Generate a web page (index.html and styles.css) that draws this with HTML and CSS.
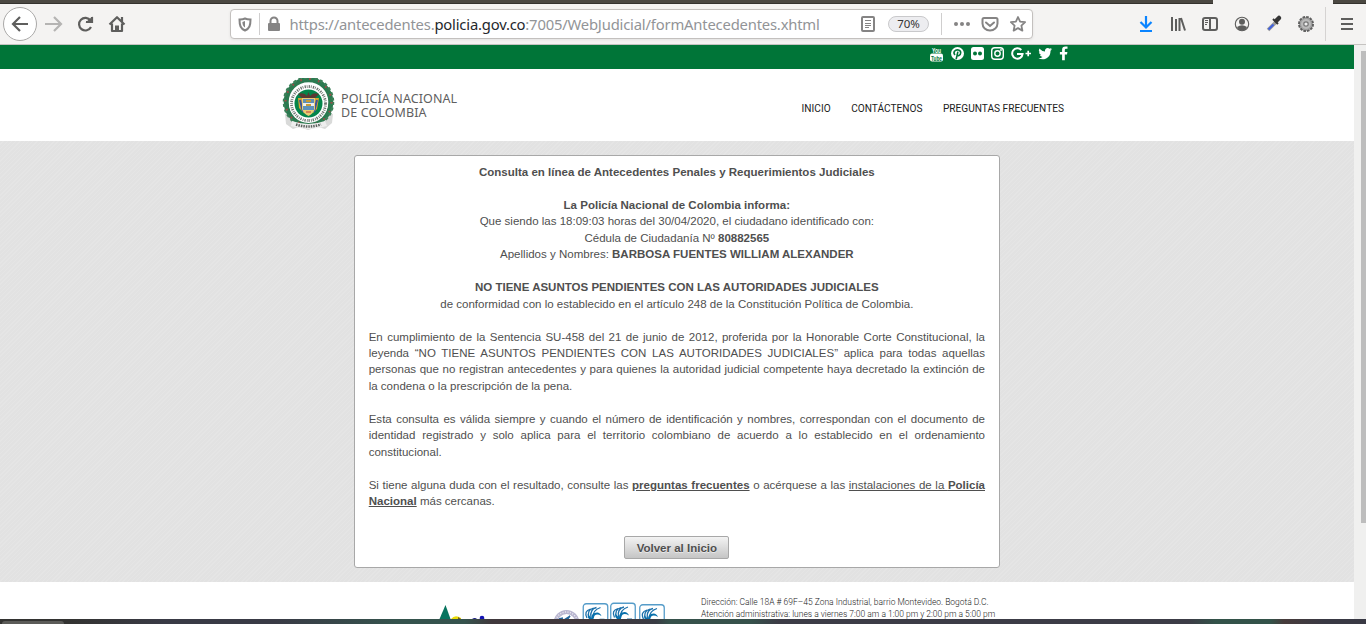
FILE: index.html
```html
<!DOCTYPE html>
<html lang="es">
<head>
<meta charset="utf-8">
<title>Policía Nacional de Colombia</title>
<link rel="stylesheet" href="styles.css">
</head>
<body>
<div class="topbar"><i></i></div>
<div class="toolbar">
  <svg class="nav-icons" width="140" height="40" viewBox="0 4 140 40" fill="none" stroke="#5e5e5d" stroke-width="2.2">
    <circle cx="20" cy="24" r="16.5" fill="#fff" stroke="#aaa9a8" stroke-width="1"/>
    <path d="M28 24H13M20 17l-7 7 7 7"/>
    <path stroke="#b5b4b3" d="M45 24h15M54 17l7 7-7 7"/>
    <path d="M90.5 20.5A6.3 6.3 0 1 0 91 27"/><path d="M92.5 16.5v6h-7z" fill="#5e5e5d" stroke="none"/><path d="M92 17v5h-6"/>
    <path d="M109.5 24.5l7.5-7.3 7.5 7.3M112 23.500v7.500h10v-7.500M122 17v5" stroke-linejoin="round"/><path d="M117 31v-5.500" stroke-width="4"/>
  </svg>
  <div class="urlbar">
    <svg width="58" height="28" viewBox="231 10 58 28" fill="none" stroke="#858484" stroke-width="2">
      <path d="M240 19.500q3 0 5-1 2 1 5.500 1c0 6-1 9-5.500 11-4.500-2-5.500-5-5.500-11z"/><path d="M245 21v6.500c-2-1-2.600-3-2.600-5.500z" fill="#858484" stroke="none"/>
      <path d="M259.500 13v22" stroke="#cfcece" stroke-width="1"/>
      <path d="M270.500 24v-3a3.500 3.500 0 0 1 7 0v3"/><rect x="268" y="23" width="12" height="8" rx="1" fill="#858484" stroke="none"/>
    </svg>
    <span class="url">https://antecedentes.<b>policia.gov.co</b>:7005/WebJudicial/formAntecedentes.xhtml</span>
    <svg class="reader" width="16" height="18" viewBox="860 15 16 18" fill="none" stroke="#858484" stroke-width="2"><rect x="862" y="17" width="12" height="14" rx="1"/><path d="M865 20.500h6M865 23.500h6M865 25.500h6M865 27.500h4" stroke-width="1"/></svg>
    <span class="zoom">70%</span>
    <svg width="92" height="28" viewBox="940 10 92 28" fill="none" stroke="#858484" stroke-width="2">
      <path d="M941.500 13v22" stroke="#cfcece" stroke-width="1"/><g fill="#858484" stroke="none"><circle cx="956" cy="24" r="2"/><circle cx="962" cy="24" r="2"/><circle cx="968" cy="24" r="2"/></g>
      <path d="M984 18h12q1.500 0 1.500 1.500v4a7.500 7 0 0 1-15 0v-4Q982.500 18 984 18zM986 22.500l4 3.500 4-3.500" stroke-linecap="round"/>
      <path stroke-width="1.800" stroke-linejoin="round" d="M1018 17l2.100 4.600 5 .6-3.700 3.400 1 5-4.400-2.500-4.400 2.500 1-5-3.700-3.400 5-.6z"/>
    </svg>
  </div>
  <svg class="tools" width="232" height="40" viewBox="1134 4 232 40" fill="none" stroke="#5e5e5d" stroke-width="2">
    <path stroke="#0a84ff" stroke-width="2.200" d="M1146 16v11M1140.500 22l5.500 5.500 5.500-5.500M1140 31h12"/>
    <path d="M1172 17v14M1176 19v12M1179.500 18v13M1181 18l4 12.500"/>
    <rect x="1203" y="18" width="14" height="12" rx="2"/><path d="M1210 18v12"/><path stroke-width="1" d="M1205 20.500h3M1205 22.500h3M1205 24.500h2"/>
    <circle cx="1242" cy="24" r="6.700" stroke-width="1.100"/><circle cx="1242" cy="21.800" r="3" fill="#5e5e5d" stroke="none"/><path fill="#5e5e5d" stroke="none" d="M1237 27q5-3.500 10 0-1.500 3.500-5 3.500t-5-3.500z"/>
    <path stroke="#9b9b9b" stroke-width="3.500" d="M1268 30l8-8"/><path stroke="#4162df" stroke-width="2" d="M1268.500 29.500l5-5"/><path stroke="#353535" stroke-width="4.500" stroke-linecap="round" d="M1276.500 20.500l2.500-2.500"/><path stroke="#353535" d="M1273 19l5 5"/>
    <circle cx="1306" cy="24" r="7" fill="#a9a9a9" stroke="#5f5f5f" stroke-width="2" stroke-dasharray="2.600 1.060"/><circle cx="1306" cy="24" r="5.500" fill="#bababa" stroke="#999" stroke-width="1"/><circle cx="1306" cy="24" r="2.200" fill="#eee" stroke="#777" stroke-width="1.200"/>
    <path stroke="#d5d3d2" stroke-width="1" d="M1325.500 7v34"/>
    <path d="M1341 19h12M1341 24h12M1341 29h12"/>
  </svg>
</div>
<div class="viewport">
  <div class="page">
    <div class="green"><svg width="144" height="18" viewBox="928 45 144 18" fill="none" stroke="#fff" stroke-width="2">
      <text x="932" y="53" class="yt" textLength="9" lengthAdjust="spacingAndGlyphs">You</text>
      <rect x="930" y="53.500" width="13" height="8" rx="2" fill="#fff" stroke="none"/><text x="931" y="60.500" class="yt tube" textLength="11" lengthAdjust="spacingAndGlyphs">Tube</text>
      <circle cx="957.500" cy="53.500" r="6.500" fill="#fff" stroke="none"/><path stroke="#007538" stroke-width="1.600" d="M955 55q-1.800-2-.5-3.800c2-2.500 6.300-1.200 6.200 1.500-.1 3-3.200 3.700-3.900 1.800M957.900 51.600l-1.700 7.500"/>
      <rect x="971" y="47" width="13" height="13" rx="2.500" fill="#fff" stroke="none"/><g fill="#007538" stroke="none"><circle cx="975" cy="53.500" r="2"/><circle cx="980" cy="53.500" r="2"/></g>
      <rect x="991.700" y="47.700" width="11.600" height="11.600" rx="3" stroke-width="1.400"/><circle cx="997.500" cy="53.500" r="2.700" stroke-width="1.400"/><circle cx="1001" cy="50" r=".9" fill="#fff" stroke="none"/>
      <path d="M1021.300 50a5.200 5.200 0 1 0 1.300 3.900H1017"/><path d="M1025.500 53.500h5.500M1028.200 50.800v5.500" stroke-width="1.700"/>
      <path fill="#fff" stroke="none" d="M1052 49.200q-.6.900-1.500 1.500c.1 5.500-3.700 8.600-7.800 8.600q-2.500 0-4.200-1.200 2.300.1 4-1.200-2-.1-2.600-1.900h1.200q-2.100-.8-2.200-2.900l1.200.3q-2-1.600-.8-3.800 2.300 2.700 5.700 2.900c-.5-3.500 3-4.500 4.700-2.700l1.800-.7q-.3 1-1.200 1.500z"/>
      <path stroke="none" fill="#fff" d="M1067.500 46.500v2.300h-1.500q-1.200 0-1.200 1.200v2h2.600l-.4 2.500h-2.200v5.800h-2.700v-5.800h-2.200v-2.500h2.200v-2.200q0-3.300 3.300-3.300z"/>
    </svg></div>
    <header>
      <svg width="54" height="52" viewBox="0 0 54 52">
        <path d="M3 36l1 10 7 5 6-2 9 3 10-3 7 2 7-6 1-9-10-2H13z" fill="#d9dad9"/>
        <circle cx="26.500" cy="24" r="22.300" fill="none" stroke="#2b7a50" stroke-width="5"/>
        <circle cx="26.500" cy="24" r="24.500" fill="none" stroke="#3c8059" stroke-width="2.500" stroke-dasharray="3 2.500"/>
        <circle cx="26.500" cy="24" r="23" fill="none" stroke="#a14b47" stroke-width="2" stroke-dasharray="1.600 7.430"/>
        <circle cx="26.500" cy="25.500" r="19.500" fill="#fff"/><circle cx="26.500" cy="25.500" r="17" fill="none" stroke="#6d746f" stroke-width="2.800" stroke-dasharray="1.300 .9 .8 1.200"/>
        <circle cx="26.500" cy="25.500" r="14" fill="#04854a"/>
        <path d="M16 16q6-2 9 2l1.500-4 1.500 4q3-4 9-2l-5 5H21z" fill="#5c3932"/><path d="M16 20h6v15l-5-5zM31 20h6l-2 11-4 4z" fill="#d5a233"/><path d="M18 22l3 12M35 22l-3 12" stroke="#3d5399" stroke-width="2"/>
        <path d="M20 20h13v11q-2 5-6.500 7-5-2-6.500-7z" fill="#e7cc74"/><path d="M21 21h11v4H21z" fill="#5e8fb5"/><path d="M21 25h11v3H21z" fill="#eee"/><path d="M21 28h11v4H21z" fill="#5d92bc"/><path d="M24 22h5v2h-5zM24 26h5v2h-5z" fill="#c59b35"/><path d="M24 34h5" stroke="#be4136"/>
        <path d="M10 43q16 6 33 0l2 5q-18 6-36 0z" fill="#eee"/><path d="M14 46.500q12 4 25 0" stroke="#5d625e" stroke-width="2.500" stroke-dasharray="1.500 1" fill="none"/>
      </svg>
      <div class="brand">POLICÍA NACIONAL<br>DE COLOMBIA</div>
      <nav><a>INICIO</a><a>CONTÁCTENOS</a><a>PREGUNTAS FRECUENTES</a></nav>
    </header>
    <main>
      <section class="card">
        <div class="center">
          <b>Consulta en línea de Antecedentes Penales y Requerimientos Judiciales</b><br><br>
          <b>La Policía Nacional de Colombia informa:</b><br>
          Que siendo las 18:09:03 horas del 30/04/2020, el ciudadano identificado con:<br>
          Cédula de Ciudadanía Nº <b>80882565</b><br>
          Apellidos y Nombres: <b>BARBOSA FUENTES WILLIAM ALEXANDER</b><br><br>
          <b>NO TIENE ASUNTOS PENDIENTES CON LAS AUTORIDADES JUDICIALES</b><br>
          de conformidad con lo establecido en el artículo 248 de la Constitución Política de Colombia.
        </div>
        <p>En cumplimiento de la Sentencia SU-458 del 21 de junio de 2012, proferida por la Honorable Corte Constitucional, la leyenda “NO TIENE ASUNTOS PENDIENTES CON LAS AUTORIDADES JUDICIALES” aplica para todas aquellas personas que no registran antecedentes y para quienes la autoridad judicial competente haya decretado la extinción de la condena o la prescripción de la pena.</p>
        <p>Esta consulta es válida siempre y cuando el número de identificación y nombres, correspondan con el documento de identidad registrado y solo aplica para el territorio colombiano de acuerdo a lo establecido en el ordenamiento constitucional.</p>
        <p>Si tiene alguna duda con el resultado, consulte las <u><b>preguntas frecuentes</b></u> o acérquese a las <u>instalaciones de la <b>Policía Nacional</b></u> más cercanas.</p>
        <button>Volver al Inicio</button>
      </section>
    </main>
    <footer>
      <svg width="236" height="37" viewBox="436 582 236 37">
        <path d="M445.500 605l-6 14h11z" fill="#08745f"/><path d="M451 619q4-5 10-1v1z" fill="#eadc05"/><path d="M458 617l3 2h-3z" fill="#765b22"/><path d="M472 619q3-2 5 0z" fill="#191a80"/><circle cx="482" cy="618" r="2.300" fill="#1414b4"/>
        <circle cx="566.500" cy="623" r="11" fill="#fff" stroke="#b9b6d0" stroke-width="4"/><circle cx="566.500" cy="623" r="11" fill="none" stroke="#e9e8ef" stroke-width="1.500" stroke-dasharray="1 1.500"/><path d="M559 619l4-1M564 620l6-4-3 4" stroke="#23669c" stroke-width="1.500" fill="none"/>
        <defs><g id="swirl"><rect x=".75" y=".75" width="24.500" height="26" rx="3" fill="#fff" stroke="#559cc9" stroke-width="1.300"/><path d="M4.500 15Q1 8 8 6M6.500 15Q4 7 11 5M8.500 15Q7 6 14 4.500M10.500 15Q10 7 18 4.500" stroke="#1b70ab" stroke-width="1.300" fill="none"/><path d="M5 11q0 6 6 8V16q1-7 8-3-2-5-7-3-3 1-3 5z" fill="#0870ac"/><path d="M17 16h5" stroke="#91b9d1"/></g></defs>
        <use href="#swirl" x="582.500" y="603"/><use href="#swirl" x="610" y="602.500"/><use href="#swirl" x="639" y="604"/>
      </svg>
      <div class="address"><span>Dirección: Calle 18A # 69F–45 Zona Industrial, barrio Montevideo. Bogotá D.C.</span><br><span>Atención administrativa: lunes a viernes 7:00 am a 1:00 pm y 2:00 pm a 5:00 pm</span></div>
    </footer>
  </div>
  <div class="scroll"><i></i></div>
</div>
<div class="desktop"><i></i></div>
</body>
</html>
```
FILE: styles.css
```css
* { box-sizing: border-box; }
body { margin: 0; width: 1366px; height: 624px; overflow: hidden; background: #fff; font-family: "Liberation Sans", Arial, sans-serif; }
svg { display: block; flex: none; }
.topbar { height: 4px; background: #4b4842; border-bottom: 1px solid #34322e; }
.topbar i { display: block; margin-left: 1213px; width: 120px; height: 4px; background: #f4f3f2; }
.toolbar { height: 41px; display: flex; background: #f4f3f2; border-bottom: 1px solid #c5c3c1; }
.urlbar { margin: 5px 0 0 90px; width: 803px; height: 30px; border: 1px solid #c3c0be; border-radius: 4px; background: #fff; display: flex; align-items: center; box-shadow: 0 1px 3px #0001; }
.url { width: 571px; font: 14.8px/28px "Noto Sans", sans-serif; color: #929497; white-space: nowrap; letter-spacing: -.19px; padding-left: .5px; }
.url b { color: #25282c; font-weight: 400; }
.zoom { margin: 0 11px 0 12px; width: 41px; height: 16px; border: 1px solid #c9c9cb; border-radius: 8px; background: #ededf0; font: 11.5px/14px "Noto Sans", sans-serif; color: #333; text-align: center; }
.tools { margin-left: 101px; }
.viewport { display: flex; height: 574px; }
.page { width: 1354px; }
.green { height: 24px; background: #007538; padding-left: 928px; }
.yt { font: bold 8px "Liberation Sans", sans-serif; fill: #fff; stroke: none; }
.tube { fill: #007538; font-size: 7px; }
header { height: 72px; background: #fff; display: flex; padding: 9px 290px 0 282px; }
.brand { margin: 14px 0 0 5px; font: 12.5px/14px "Noto Sans", sans-serif; color: #606060; white-space: nowrap; letter-spacing: .1px; }
nav { display: flex; gap: 20.5px; margin: 23px 0 0 auto; font: 10.15px/16px Roboto, sans-serif; color: #222; white-space: nowrap; }
main { height: 441px; padding-top: 14px; background: repeating-linear-gradient(135deg, #e2e2e2 0 2px, #e5e5e5 2px 3px); }
.card { margin: 0 auto; width: 646px; height: 413px; background: #fff; border: 1px solid #a8a8a8; border-radius: 3px; padding: 8px 14px 0 13.7px; font-size: 11.52px; line-height: 16.46px; color: #4f4f4f; }
.center { text-align: center; }
p { margin: 16.46px 0 0; text-align: justify; }
button { display: block; margin: 26px auto 0; width: 105px; height: 23px; border: 1px solid #a8a8a8; border-radius: 2px; background: linear-gradient(#f3f3f3, #c5c5c5); color: #4f4f4f; font: bold 11.52px "Liberation Sans", sans-serif; padding: 1px 0 0; text-shadow: 0 1px 0 #fff8; }
footer { height: 37px; display: flex; padding-left: 436px; background: #fff; overflow: hidden; }
.address { margin: 14px 0 0 29px; font: 300 8.47px/12px Roboto, sans-serif; color: #222; white-space: nowrap; }
.scroll { width: 12px; background: #f0f0ef; padding: 6px 0 0 7px; }
.scroll i { display: block; width: 5px; height: 472px; background: #bdbdbd; }
.desktop { height: 5px; background: linear-gradient(90deg, #333331 0 5%, #393a45 12% 20%, #35534d 29% 34%, #40383c 36% 43%, #393b43 48%, #36514b 49% 55%, #3c3c46 57% 87%, #335249 89% 93%, #473b3b 94%, #393944 97%); padding: 2px 0 0 2px; }
.desktop i { display: block; width: 62px; height: 3px; background: #5b5b58; border-radius: 3px 3px 0 0; }
```
